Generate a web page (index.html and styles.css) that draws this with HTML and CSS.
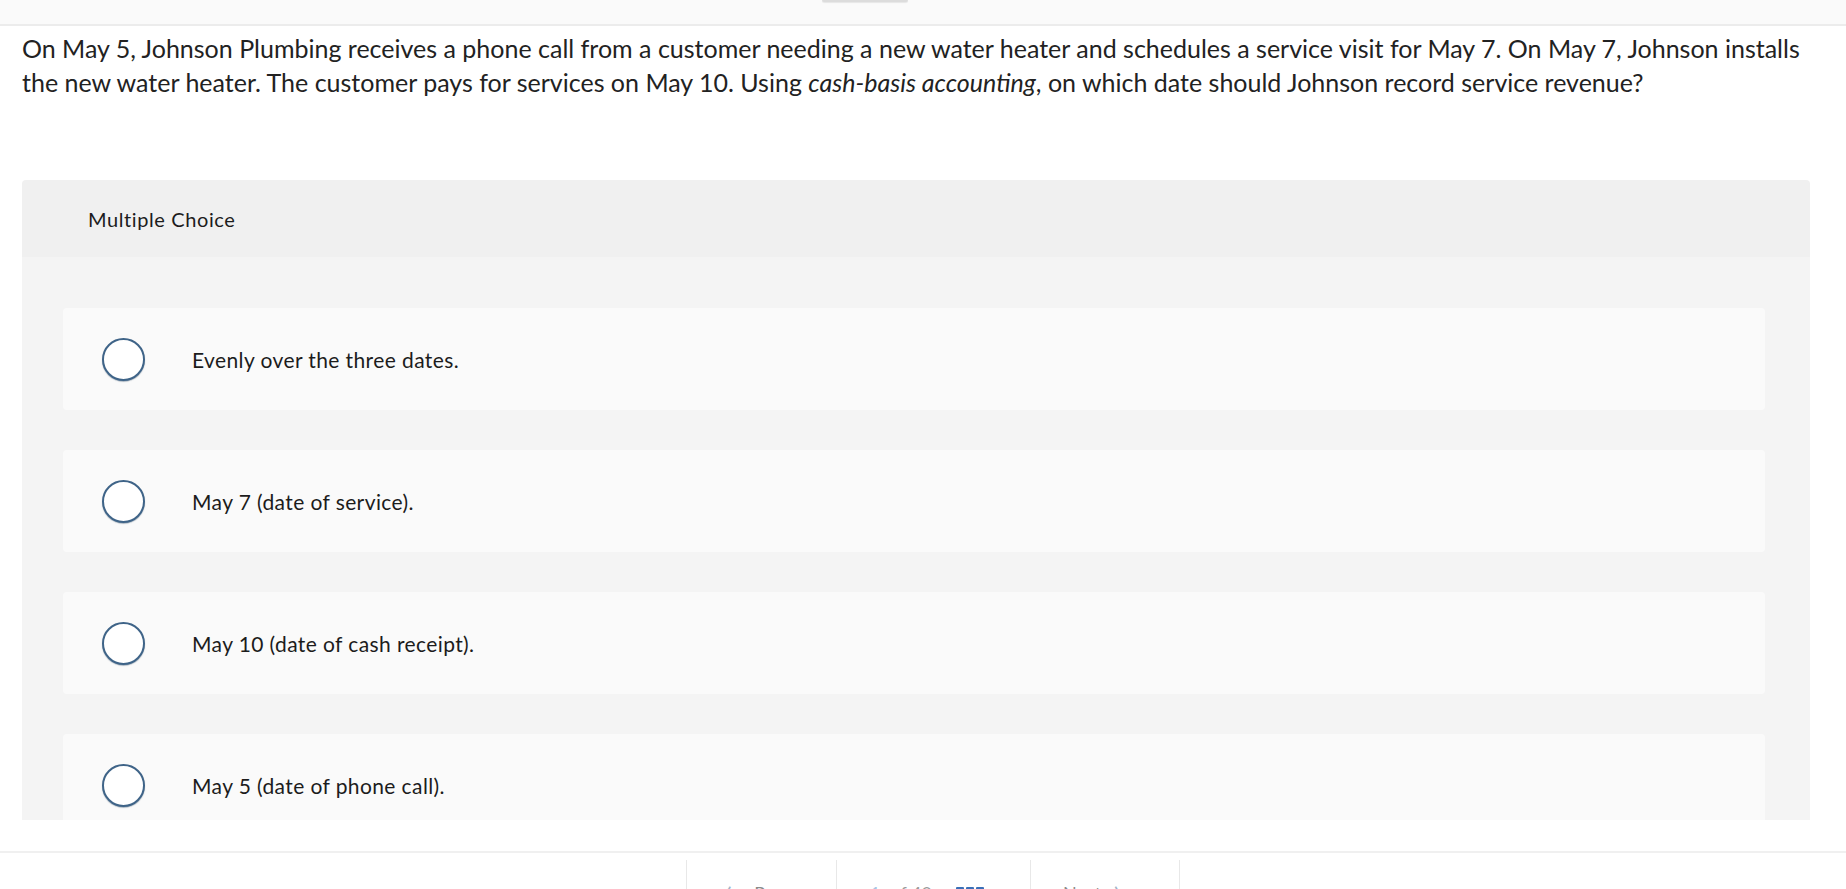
FILE: index.html
```html
<!DOCTYPE html>
<html lang="en">
<head>
<meta charset="utf-8">
<title>Multiple Choice</title>
<link rel="stylesheet" href="styles.css">
</head>
<body>
<div class="topbar"><span class="tab-handle"></span></div>
<div class="main">
  <p class="question">On May 5, Johnson Plumbing receives a phone call from a customer needing a new water heater and schedules a service visit for May 7. On May 7, Johnson installs the new water heater. The customer pays for services on May 10. Using <em class="term">cash-basis accounting</em>, on which date should Johnson record service revenue?</p>
  <section class="panel">
    <div class="panel-head">Multiple Choice</div>
    <div class="panel-body">
      <label class="choice"><span class="radio"></span><span class="choice-text">Evenly over the three dates.</span></label>
      <label class="choice"><span class="radio"></span><span class="choice-text">May 7 (date of service).</span></label>
      <label class="choice"><span class="radio"></span><span class="choice-text">May 10 (date of cash receipt).</span></label>
      <label class="choice"><span class="radio"></span><span class="choice-text">May 5 (date of phone call).</span></label>
    </div>
  </section>
</div>
<footer class="footer">
  <nav class="pager">
    <div class="pager-item prev"><span class="chev">&lsaquo;</span><span class="pg-label">Prev</span></div>
    <div class="pager-item count"><span class="cur">1</span><span class="of">of 40</span>
      <span class="grid-icon"><i></i><i></i><i></i></span>
    </div>
    <div class="pager-item next"><span class="pg-label">Next</span><span class="chev">&rsaquo;</span></div>
  </nav>
</footer>
</body>
</html>
```
FILE: styles.css
```css
html, body {
  margin: 0;
  padding: 0;
  background: #ffffff;
  font-family: "Lato", "Liberation Sans", sans-serif;
  color: #1c1c1c;
  overflow: hidden;
}

.topbar {
  position: relative;
  height: 24px;
  background: #fafafa;
  border-bottom: 2px solid #ececec;
}

.tab-handle {
  position: absolute;
  left: 822px;
  top: 0;
  width: 86px;
  height: 2px;
  background: #dcdcdc;
  border-radius: 0 0 3px 3px;
  box-shadow: 0 1px 1px rgba(0, 0, 0, 0.08);
}

.main {
  height: 794px;
  overflow: hidden;
}

.question {
  margin: 5px 0 0 0;
  padding: 0 22px 0 22px;
  font-size: 25px;
  line-height: 34px;
  color: #222222;
}

.question .term {
  font-style: italic;
}

.panel {
  margin: 81px 36px 0 22px;
  border-radius: 4px 4px 0 0;
  overflow: hidden;
}

.panel-head {
  height: 77px;
  display: flex;
  align-items: center;
  padding-left: 66px;
  background: #f0f0f0;
  font-size: 20px;
  letter-spacing: 0.6px;
  color: #1c1c1c;
}

.panel-body {
  background: #f4f4f4;
  padding: 51px 45px 40px 41px;
  display: flex;
  flex-direction: column;
  gap: 40px;
}

.choice {
  height: 102px;
  display: flex;
  align-items: center;
  background: #fafafa;
  border-radius: 4px;
  padding-left: 39px;
}

.radio {
  width: 39px;
  height: 39px;
  border: 2px solid #3f6488;
  border-radius: 50%;
  background: #ffffff;
  box-shadow: 0 1px 1px rgba(30, 60, 90, 0.35);
  flex: none;
}

.choice-text {
  margin-left: 47px;
  font-size: 21px;
  letter-spacing: 0.4px;
  color: #1c1c1c;
}

.footer {
  margin-top: 31px;
  border-top: 2px solid #f0f0f0;
  height: 60px;
}

.pager {
  display: flex;
  padding: 7px 0 0 686px;
  height: 60px;
  box-sizing: border-box;
}

.pager-item {
  border-left: 1px solid #e8e8e8;
  display: flex;
  align-items: flex-start;
  padding-top: 21px;
  font-size: 18px;
  line-height: 24px;
  color: #8a8a8a;
  box-sizing: border-box;
}

.pager-item.prev {
  width: 150px;
  padding-left: 38px;
}

.pager-item.count {
  width: 194px;
  padding-left: 33px;
}

.pager-item.next {
  width: 150px;
  padding-left: 32px;
  border-right: 1px solid #e8e8e8;
}

.chev {
  font-size: 26px;
  color: #9fb3c8;
  margin-right: 22px;
  margin-top: -4px;
}

.next .chev {
  margin: -4px 0 0 12px;
}

.cur {
  color: #a9c5e4;
  margin-right: 10px;
}

.of {
  color: #9a9a9a;
}

.grid-icon {
  display: inline-flex;
  gap: 2px;
  margin-left: 24px;
  margin-top: 6px;
}

.grid-icon i {
  display: block;
  width: 8px;
  height: 8px;
  background: #3a6fb8;
  border-radius: 1px;
}
```
